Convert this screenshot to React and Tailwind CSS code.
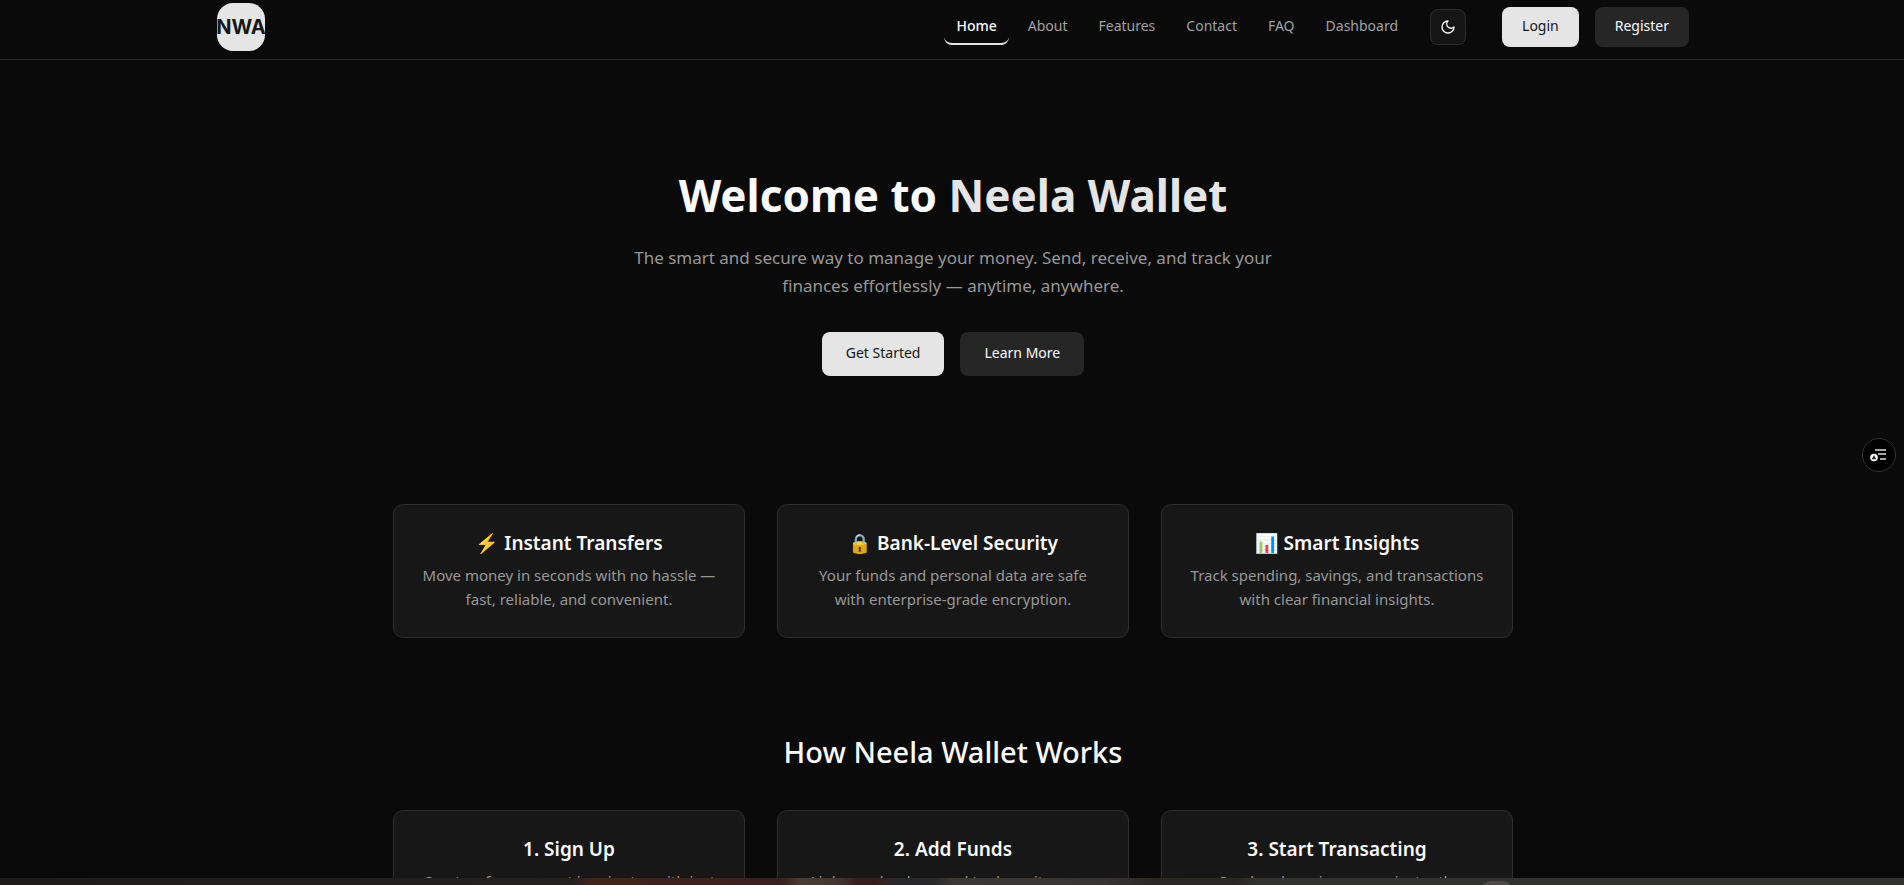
import { useState } from 'react';

const links = ['Home', 'About', 'Features', 'Contact', 'FAQ', 'Dashboard'];

const features = [
  { title: '⚡ Instant Transfers', text: 'Move money in seconds with no hassle — fast, reliable, and convenient.' },
  { title: '🔒 Bank-Level Security', text: 'Your funds and personal data are safe with enterprise-grade encryption.' },
  { title: '📊 Smart Insights', text: 'Track spending, savings, and transactions with clear financial insights.' },
];

const steps = [
  { title: '1. Sign Up', text: 'Create a free account in minutes with just your email.' },
  { title: '2. Add Funds', text: 'Link your bank or card to deposit money securely.' },
  { title: '3. Start Transacting', text: 'Send and receive money instantly whenever you need.' },
];

function Card({ title, text }) {
  return (
    <div className="rounded-[10px] border border-[#2e2e2e] bg-[#171717] px-6 pt-6 pb-[26px] text-center">
      <h3 className="mb-1.5 text-[19px] leading-7 font-semibold text-neutral-50">{title}</h3>
      <p className="text-[15px] leading-6 text-[#979797]">{text}</p>
    </div>
  );
}

function Navbar() {
  const [active, setActive] = useState('Home');

  return (
    <header className="border-b border-[#282828] pl-0.5">
      <div className="mx-auto flex h-[59px] max-w-screen-2xl items-center justify-between px-8 pb-[5px]">
        <a href="#" className="flex size-12 items-center justify-center rounded-2xl bg-neutral-200 font-['Inter',sans-serif] text-xl font-bold text-neutral-900">
          NWA
        </a>
        <div className="flex items-center">
          <nav className="flex gap-[7px] text-sm">
            {links.map((link) => (
              <a
                key={link}
                href={`#${link.toLowerCase()}`}
                onClick={() => setActive(link)}
                className={
                  active === link
                    ? 'rounded-lg border-b-2 border-neutral-200 px-3 py-[7px] font-medium text-neutral-50'
                    : 'rounded-lg border-b-2 border-transparent px-3 py-[7px] text-[#a1a1a1]'
                }
              >
                {link}
              </a>
            ))}
          </nav>
          <button aria-label="Toggle theme" className="ml-5 flex size-9 items-center justify-center rounded-lg border border-[#2e2e2e] bg-[#151515] text-neutral-50">
            <svg viewBox="0 0 24 24" className="size-4" fill="none" stroke="currentColor" strokeWidth="2" strokeLinecap="round" strokeLinejoin="round">
              <path d="M12 3a6 6 0 0 0 9 9 9 9 0 1 1-9-9Z" />
            </svg>
          </button>
          <button className="ml-9 h-10 rounded-lg bg-neutral-200 px-5 pb-0.5 text-sm text-neutral-900">Login</button>
          <button className="ml-4 h-10 rounded-lg bg-[#262626] px-5 pb-0.5 text-sm text-neutral-50">Register</button>
        </div>
      </div>
    </header>
  );
}

export default function App() {
  return (
    <div className="h-screen overflow-hidden bg-[#0a0a0a] font-['Noto_Sans',sans-serif]">
      <Navbar />
      <main className="pl-0.5">
        <section className="px-4 pt-28 pb-20 text-center">
          <h1 className="pb-0.5 text-[44px] leading-[46px] font-bold text-neutral-50">
            Welcome to <span className="text-neutral-200">Neela Wallet</span>
          </h1>
          <p className="mx-auto mt-6 max-w-2xl text-[17px] leading-7 text-[#979797]">
            The smart and secure way to manage your money. Send, receive, and track your finances effortlessly — anytime, anywhere.
          </p>
          <div className="mt-8 flex justify-center gap-4">
            <button className="h-11 rounded-lg bg-neutral-200 px-6 pb-0.5 text-sm text-neutral-900">Get Started</button>
            <button className="h-11 rounded-lg bg-[#262626] px-6 pb-0.5 text-sm text-neutral-50">Learn More</button>
          </div>
        </section>

        <section className="mx-auto grid max-w-6xl grid-cols-3 gap-8 px-4 py-12">
          {features.map((item) => (
            <Card key={item.title} {...item} />
          ))}
        </section>

        <section className="mx-auto max-w-6xl px-4 py-12">
          <h2 className="mb-10 text-center text-[29px] leading-9 font-medium text-neutral-50">How Neela Wallet Works</h2>
          <div className="grid grid-cols-3 gap-8">
            {steps.map((item) => (
              <Card key={item.title} {...item} />
            ))}
          </div>
        </section>
      </main>

      {/* floating reader button */}
      <button aria-label="Open reader panel" className="fixed top-[438px] right-2 flex size-[34px] items-center justify-center rounded-full border border-[#333] bg-black">
        <svg viewBox="0 0 18 14" className="h-[14px] w-[18px]" fill="none">
          <path d="M5 2h11M8 6h8M10 11h6" stroke="#ddd" strokeWidth="1.4" />
          <circle cx="4" cy="9.5" r="3.8" fill="#fff" />
          <path d="M4 7l2.2 4.200H1.800z" fill="#222" />
        </svg>
      </button>

      {/* media strip along the bottom edge */}
      <div className="fixed inset-x-0 bottom-0 h-[7px] overflow-hidden bg-[linear-gradient(90deg,#1e1c1a_0%,#222120_30%,#44221c_31%,#3c1e1a_41%,#4a3b30_42%,#45362d_44%,#3a1d1b_45%,#3a1d1b_46%,#28282a_47%,#28282a_49%,#3d3833_50%,#38332d_58%,#292623_61%,#282724_65%,#33332e_66%,#33332e_100%)]">
        <div className="mt-[3px] ml-[78%] h-8 w-8 -translate-x-1 rounded-[10px] bg-[#4d4a4a]"></div>
      </div>
    </div>
  );
}
